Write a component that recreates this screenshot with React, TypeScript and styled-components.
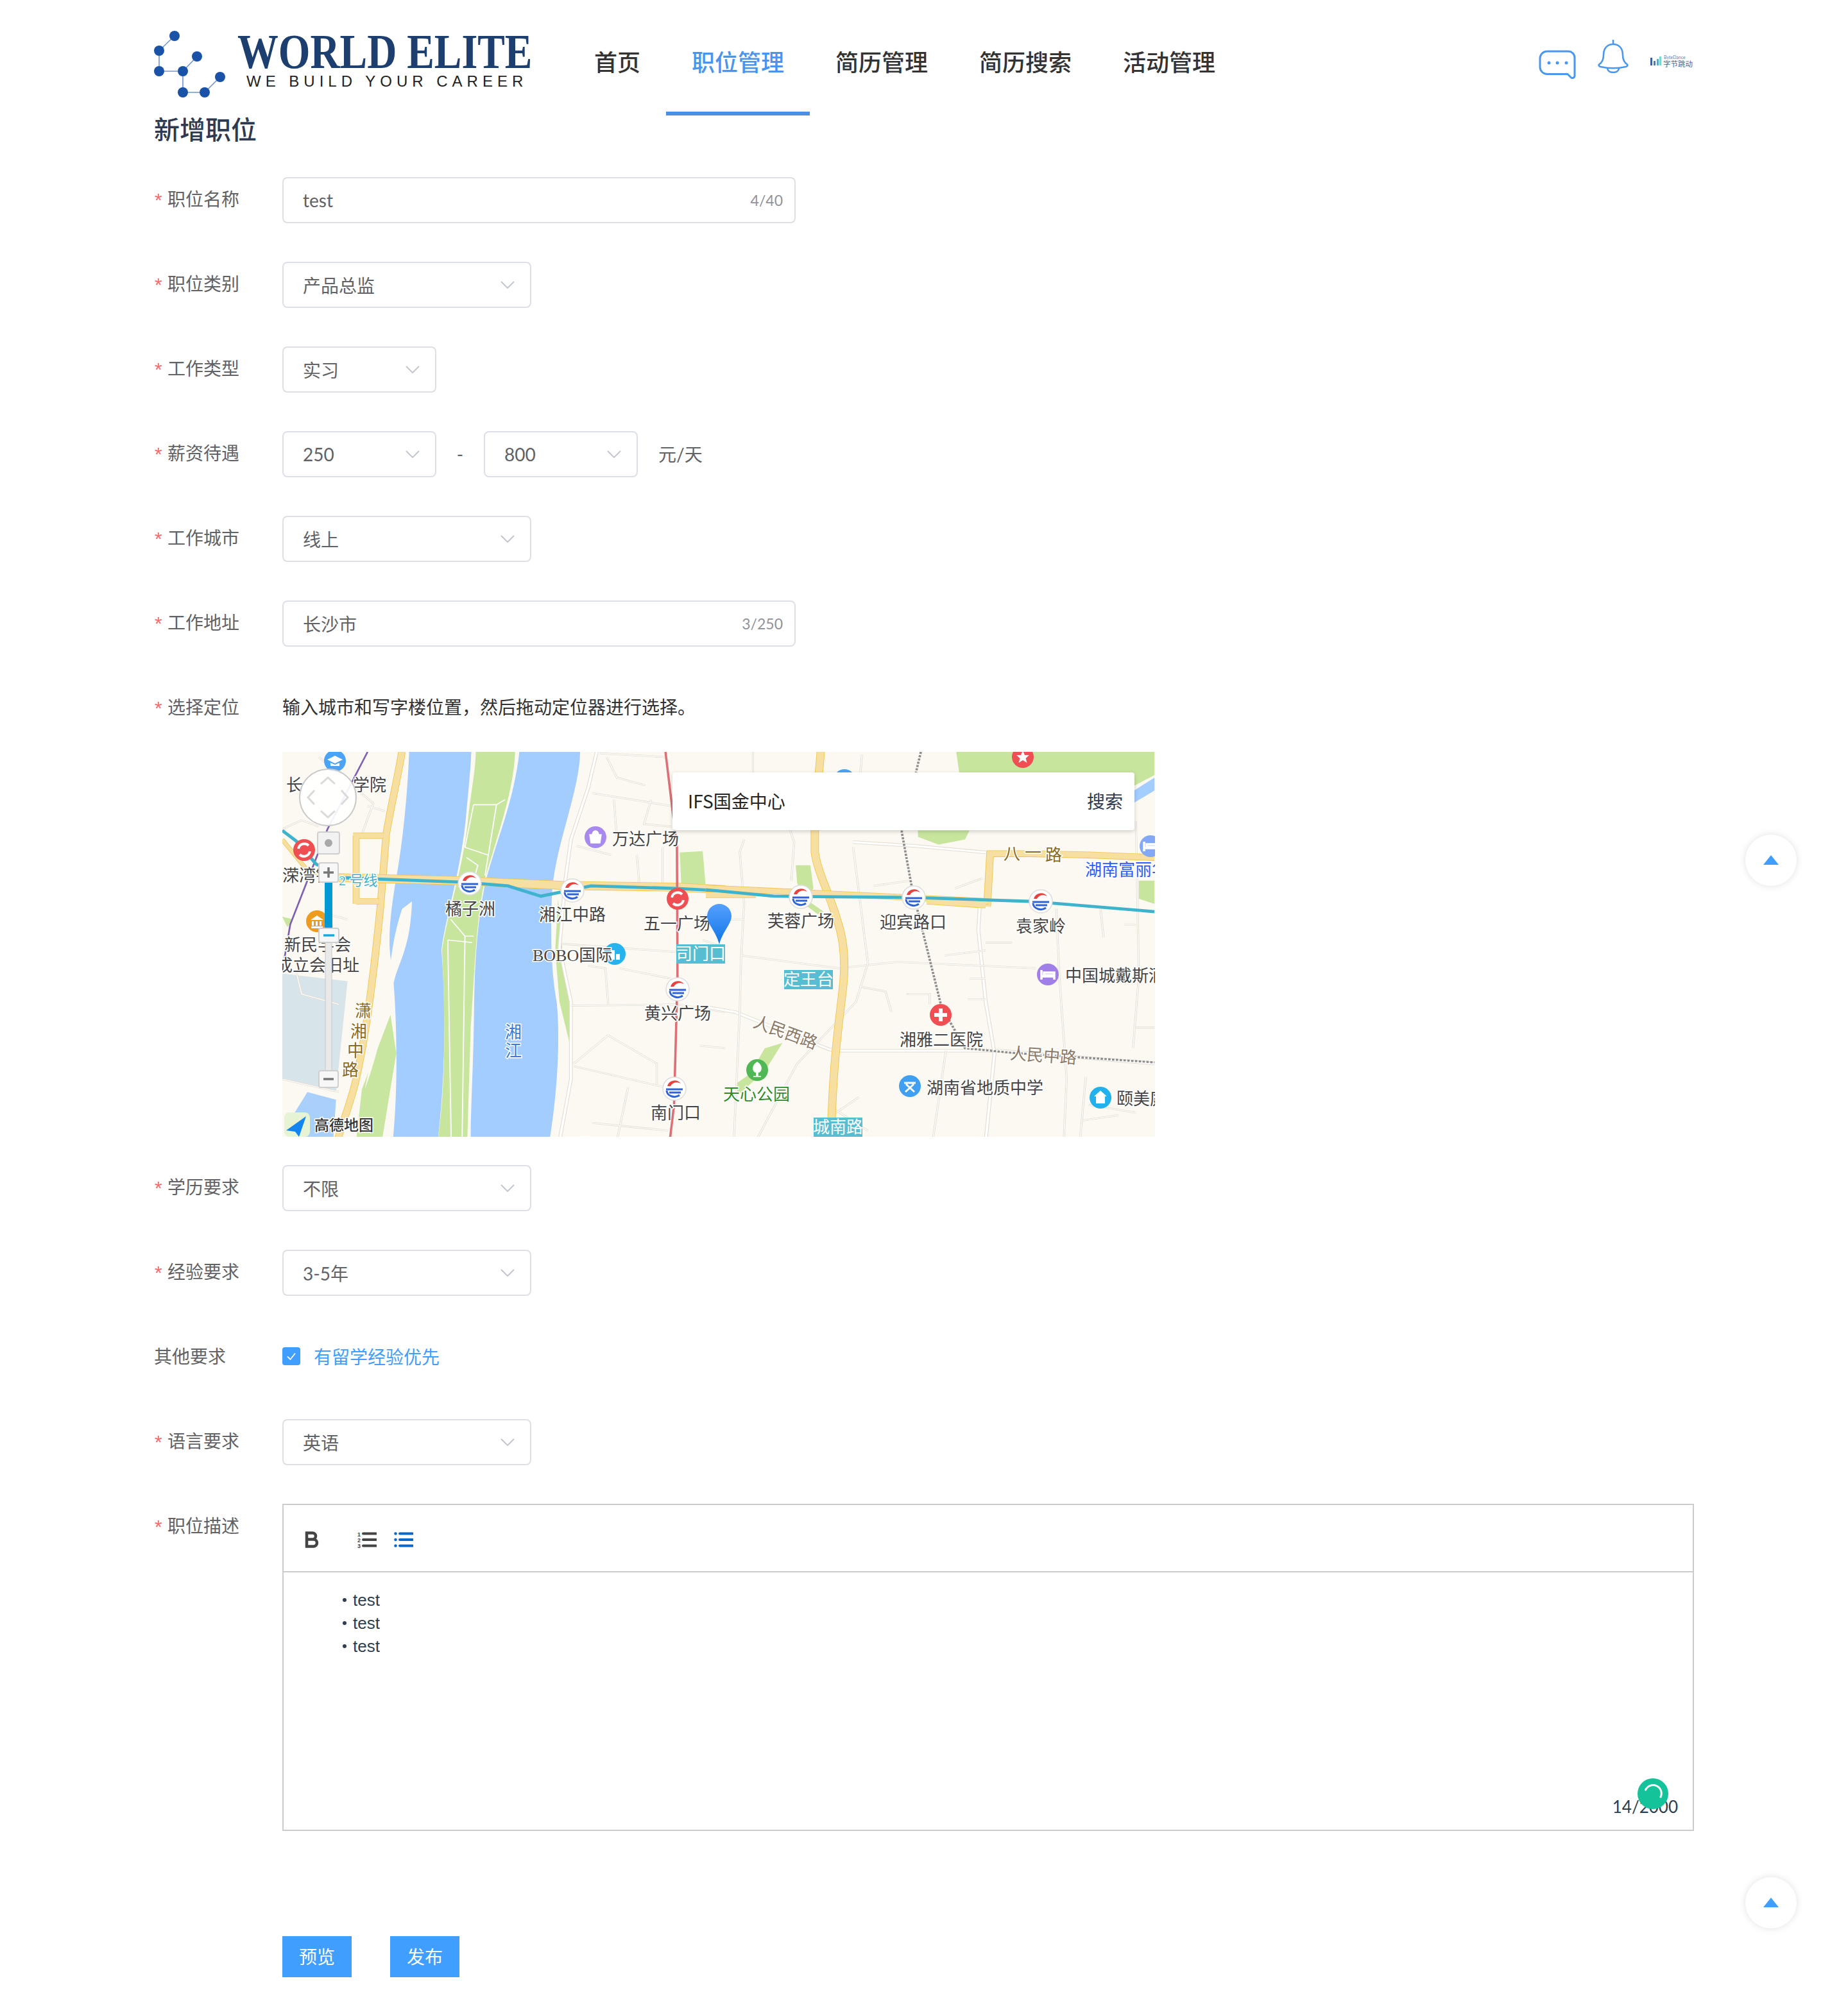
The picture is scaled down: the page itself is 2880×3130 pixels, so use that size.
import React from 'react';
import styled, { createGlobalStyle } from 'styled-components';

const GlobalStyle = createGlobalStyle`
  html, body {
    margin: 0;
    padding: 0;
    background: #fff;
    font-family: Lato, "Noto Sans CJK SC", sans-serif;
  }
  * { box-sizing: border-box; }
`;

const Page = styled.div`
  position: relative;
  width: 2880px;
  height: 3130px;
  padding: 0 240px;
  overflow: hidden;
`;

const Header = styled.header`
  display: flex;
  align-items: flex-start;
  height: 180px;
`;

const Logo = styled.div`
  display: flex;
  flex: none;
  width: 646px;
  height: 180px;
  padding-top: 48px;
`;

const LogoMarkSvg = styled.svg`
  flex: none;
`;

const LogoWords = styled.div`
  flex: none;
  width: 470px;
  margin-left: 18px;
  display: flex;
  flex-direction: column;
`;

const LogoName = styled.div`
  font-family: "Liberation Serif", serif;
  font-weight: 700;
  font-size: 76px;
  line-height: 64px;
  color: #1c3f70;
  white-space: nowrap;
  transform: scaleX(0.84);
  transform-origin: left center;
`;

const LogoTag = styled.div`
  font-family: "Liberation Sans", sans-serif;
  font-size: 24px;
  line-height: 30px;
  letter-spacing: 7px;
  margin: 0 0 0 14px;
  color: #222;
  white-space: nowrap;
`;

const Nav = styled.nav`
  display: flex;
  flex: 1;
`;

const NavItem = styled.a<{ $active?: boolean }>`
  height: 180px;
  padding: 0 40px;
  font-size: 36px;
  font-weight: 500;
  line-height: 194px;
  color: ${(p) => (p.$active ? '#4a94f0' : '#333')};
  border-bottom: 6px solid ${(p) => (p.$active ? '#4a90e2' : 'transparent')};
`;

const HeaderIcons = styled.div`
  display: flex;
  align-items: flex-start;
  padding-top: 62px;
  height: 180px;
  margin-right: 2px;
`;

const ChatIcon = styled.svg`
  margin: 16px 34px 0 0;
`;

const BellIcon = styled.svg`
  margin-right: 34px;
`;

const ByteLogo = styled.svg`
  margin-top: 24px;
`;

const Title = styled.h1`
  margin: 0 0 52px;
  font-size: 40px;
  font-weight: 500;
  line-height: 44px;
  color: #2d3a4f;
`;

const FormItem = styled.div<{ $gap?: number }>`
  display: flex;
  margin-bottom: ${(p) => p.$gap ?? 60}px;
  min-height: 72px;
`;

const Label = styled.label`
  flex: none;
  width: 200px;
  font-size: 28px;
  line-height: 68px;
  color: #606266;
  white-space: nowrap;
`;

const Star = styled.span`
  display: inline-block;
  width: 21px;
  padding-left: 1px;
  font-family: "Liberation Sans", sans-serif;
  font-size: 30px;
  color: #f56c6c;
  position: relative;
  top: 1px;
`;

const TextInput = styled.div`
  display: flex;
  align-items: center;
  justify-content: space-between;
  width: 800px;
  height: 72px;
  padding: 0 18px 0 30px;
  border: 2px solid #dcdfe6;
  border-radius: 8px;
  font-size: 28px;
  color: #606266;
`;

const Count = styled.span`
  font-size: 23px;
  color: #909399;
`;

const Select = styled.div<{ $small?: boolean }>`
  display: flex;
  align-items: center;
  justify-content: space-between;
  width: ${(p) => (p.$small ? 240 : 388)}px;
  height: 72px;
  padding: 0 24px 0 30px;
  border: 2px solid #dcdfe6;
  border-radius: 8px;
  font-size: 28px;
  color: #606266;
`;

const SalaryDash = styled.span`
  width: 74px;
  text-align: center;
  font-size: 28px;
  line-height: 72px;
  color: #606266;
`;

const Unit = styled.span`
  margin-left: 32px;
  font-size: 28px;
  line-height: 72px;
  color: #606266;
`;

const Hint = styled.div`
  font-size: 28px;
  line-height: 68px;
  color: #303133;
`;

const MapFrame = styled.div`
  position: relative;
  width: 1360px;
  height: 600px;
  margin: 0 0 44px 200px;
  overflow: hidden;
  background: #fcf9f2;
`;

const MapSearch = styled.div`
  position: absolute;
  left: 608px;
  top: 32px;
  width: 720px;
  height: 90px;
  display: flex;
  align-items: center;
  justify-content: space-between;
  padding: 0 18px 2px 24px;
  background: #fff;
  border-radius: 4px;
  box-shadow: 0 2px 6px rgba(0, 0, 0, 0.18);
  font-family: "Noto Sans CJK SC", sans-serif;
  font-size: 28px;
  color: #222;
`;

const SearchAction = styled.span`
  color: #2d3a4f;
`;

const MapText = styled.text<{ $tone?: string; $size?: number }>`
  font-family: "Liberation Serif", "Noto Sans CJK SC", serif;
  font-size: ${(p) => p.$size ?? 26}px;
  fill: ${(p) => p.$tone ?? '#444'};
  stroke: #fff;
  stroke-width: 3px;
  paint-order: stroke;
  dominant-baseline: central;
`;

const TagText = styled(MapText)`
  fill: #fff;
  stroke-width: 0;
`;

const CheckRow = styled.div`
  display: flex;
  align-items: center;
  gap: 21px;
  height: 68px;
  font-size: 28px;
  color: #409eff;
`;

const CheckBox = styled.span`
  display: flex;
  align-items: center;
  justify-content: center;
  width: 28px;
  height: 28px;
  border-radius: 4px;
  background: #409eff;
`;

const Editor = styled.div`
  position: relative;
  display: flex;
  flex-direction: column;
  width: 2200px;
  height: 510px;
  border: 2px solid #ccc;
`;

const Toolbar = styled.div`
  display: flex;
  align-items: center;
  height: 105px;
  padding: 4px 0 0 33px;
  border-bottom: 2px solid #ccc;
`;

const ToolIcon = styled.svg<{ $gap?: number }>`
  margin-right: ${(p) => p.$gap ?? 0}px;
`;

const EditorBody = styled.div`
  flex: 1;
  display: flex;
  flex-direction: column;
  padding: 25px 23px 18px 90px;
`;

const Bullet = styled.div`
  position: relative;
  padding-left: 18px;
  font-family: "Liberation Sans", sans-serif;
  font-size: 26px;
  line-height: 36px;
  color: #2c3e50;

  &::before {
    content: '';
    position: absolute;
    left: 2px;
    top: 15px;
    width: 6px;
    height: 6px;
    border-radius: 50%;
    background: #2c3e50;
  }
`;

const WordCount = styled.div`
  margin-top: auto;
  align-self: flex-end;
  font-size: 26px;
  line-height: 36px;
  color: #2c3e50;
`;

const GrammarBadge = styled.svg`
  position: absolute;
  right: 38px;
  bottom: 32px;
`;

const Actions = styled.div`
  display: flex;
  gap: 60px;
  margin: 164px 0 0 200px;
`;

const ActionButton = styled.button`
  width: 108px;
  height: 64px;
  padding: 0 0 2px;
  border: 0;
  background: #409eff;
  color: #fff;
  font-family: inherit;
  font-size: 28px;
`;

const ScrollTop = styled.div<{ $top: number }>`
  position: absolute;
  left: 2720px;
  top: ${(p) => p.$top}px;
  width: 80px;
  height: 80px;
  display: flex;
  align-items: center;
  justify-content: center;
  border-radius: 50%;
  background: #fff;
  box-shadow: 0 0 12px rgba(0, 0, 0, 0.12);

  &::after {
    content: '';
    margin-top: -2px;
    border-left: 12px solid transparent;
    border-right: 12px solid transparent;
    border-bottom: 15px solid #409eff;
  }
`;

function Chevron() {
  return (
    <svg width="22" height="14" viewBox="0 0 22 14" fill="none">
      <path d="M1 2l10 10L21 2" stroke="#c0c4cc" strokeWidth="1.8" />
    </svg>
  );
}

function LogoMark() {
  const dots = [
    [32, 8], [8, 31], [67, 40], [8, 63], [45, 63], [103, 72], [45, 96], [79, 96],
  ];
  return (
    <LogoMarkSvg width="112" height="108" viewBox="0 0 112 108" fill="none">
      <path
        d="M32 8L8 31V63H45V96H79L103 72M45 63L67 40"
        stroke="#6d95d6"
        strokeWidth="1.6"
      />
      {dots.map(([x, y]) => (
        <circle key={`${x}-${y}`} cx={x} cy={y} r="8" fill="#1a52a8" />
      ))}
    </LogoMarkSvg>
  );
}

function Metro({ x, y }: { x: number; y: number }) {
  return (
    <g transform={`translate(${x} ${y})`}>
      <circle r="18" fill="#fff" stroke="#ddd" strokeWidth="1.5" />
      <path d="M-11 -4a12 12 0 0 1 21 -4c-6-3-13-2-16 4z" fill="#e8423f" />
      <path d="M-13 1h26M-8 6h18" stroke="#2e63d6" strokeWidth="3" fill="none" />
      <path d="M-12 3a12 10 0 0 0 20 7" stroke="#2e63d6" strokeWidth="3" fill="none" />
    </g>
  );
}

function Poi({
  x,
  y,
  color,
  children,
  r = 17,
}: {
  x: number;
  y: number;
  color: string;
  children?: React.ReactNode;
  r?: number;
}) {
  return (
    <g transform={`translate(${x} ${y})`}>
      <circle r={r} fill={color} />
      {children}
    </g>
  );
}

function Road({ d, wide }: { d: string; wide?: boolean }) {
  return (
    <>
      <path d={d} fill="none" stroke="#e3dcd0" strokeWidth={wide ? 13 : 7} />
      <path d={d} fill="none" stroke="#fff" strokeWidth={wide ? 8 : 3} />
    </>
  );
}

function MainRoad({ d, w = 14 }: { d: string; w?: number }) {
  return (
    <>
      <path d={d} fill="none" stroke="#f3c54a" strokeWidth={w + 4} />
      <path d={d} fill="none" stroke="#f6dfa1" strokeWidth={w} />
    </>
  );
}

function StationTag({ x, y, w, text }: { x: number; y: number; w: number; text: string }) {
  return (
    <g>
      <rect x={x} y={y} width={w} height="30" fill="#57bdd0" />
      <TagText x={x + w / 2} y={y + 15} textAnchor="middle">
        {text}
      </TagText>
    </g>
  );
}

// zoom crops are stretched, so the geometry is traced per crop and scaled back
const LEFT_TRACE = 'translate(-10 -12) scale(0.4464 0.4016)';
const RIGHT_TRACE = 'translate(660 -12) scale(0.4591 0.4016)';

function CityMap() {
  return (
    <svg width="1360" height="600" viewBox="0 0 1360 600" style={{ display: 'block' }}>
      <rect width="1360" height="600" fill="#fcf9f2" />
      <g transform={LEFT_TRACE}>
        <path d="M22 890L250 920L210 1350L22 1300Z" fill="#d7e4ea" />
        <path d="M60 1440L110 1350L210 1380L200 1540H60Z" fill="#a9d0fb" />
        <path d="M22 670L60 680L40 710Z" fill="#c9e6a0" />
        <path d="M300 1340L400 1050L420 1200L370 1540H280Z" fill="#c9e6a0" />
        <path d="M1410 420L1490 415L1500 545H1415Z" fill="#c9e6a0" />
        <path
          d="M465 30C460 200 440 400 420 520C405 620 385 760 405 860C420 1000 430 1300 408 1540H565C590 1300 595 1050 578 800C590 680 640 520 662 300C670 200 680 100 682 30Z"
          fill="#a3ccff"
        />
        <path d="M850 30C830 220 780 340 735 520C710 640 695 800 692 1000C690 1250 680 1400 680 1540H955C990 1300 990 1100 980 1000C955 850 960 650 965 560C980 380 1060 180 1062 30Z" fill="#a3ccff" />
        <path d="M440 640L475 610C470 750 450 800 420 890C395 980 360 1200 310 1340L385 950C405 850 400 780 440 640Z" fill="#fcf9f2" />
        <path
          d="M698 30H835C830 180 780 330 730 520C700 680 695 850 680 1100L668 1540H565C595 1300 590 1050 580 800C600 650 650 500 670 300C680 190 695 120 698 30Z"
          fill="#c8e59e"
        />
        <path d="M985 600L1000 800L1025 1010L1025 1160L990 1000L975 800Z" fill="#c8e59e" />
        <path d="M690 235L770 235L800 215M690 235L660 400L740 430M665 440L705 470L695 510M610 680L660 745L690 745M600 760L685 770M770 235L730 510M600 760L612 1540M660 745L650 1540" fill="none" stroke="#fff" strokeWidth="4" />
        <Road wide d="M1120 30L1090 170L1030 370L1010 530L990 790L1030 1000L1030 1300L990 1540" />
        <Road d="M1130 35L1360 50M1155 50L1190 130L1290 160M1105 190L1380 240M1180 215L1190 360M1310 215L1285 310L1380 320M1050 395L1170 430" />
        <Road d="M1000 775L1568 820M1030 1015L1400 1010L1568 1040M1040 1250L1390 1340M1160 1130L1040 1240M1160 1130L1330 1240V1320M1230 1330L1190 1540M1105 1470L1370 1500M1090 860L1150 870L1160 1010M1200 870L1380 910M1260 430L1270 560M1350 400V540" />
        <Road d="M150 50L340 230L300 350M22 330L90 295L150 320M250 680L180 660M220 1010L90 970L70 880M22 1300L220 1350M320 240L380 260M1480 1170L1568 1180M1490 760L1568 790" />
        <MainRoad d="M440 30C425 130 400 250 385 350L365 630C345 850 320 1100 280 1300C260 1400 230 1470 215 1540" w={22} />
        <MainRoad d="M270 355H375M280 610H360M280 355V620" w={20} />
        <MainRoad d="M220 518L640 530L1000 548L1400 555L1568 565" w={30} />
        <MainRoad d="M22 370L110 490L160 505" w={12} />
        <path d="M320 30L180 330L50 700L30 830" fill="none" stroke="#7d5fb5" strokeWidth="6" />
        <path d="M1360 30L1400 400L1402 900L1390 1400L1375 1540" fill="none" stroke="#dd6f77" strokeWidth="8" />
        <path d="M22 335L70 375L140 465L220 518L640 535L810 550L925 590L1100 550L1400 560L1568 570" fill="none" stroke="#3fb2cc" strokeWidth="12" />
      </g>
      <g transform={RIGHT_TRACE}>
        <path d="M850 30H1523V120L1440 170L1420 140L1330 110H860Z" fill="#c8e59e" />
        <path d="M720 335H895L880 370L790 390L720 360Z" fill="#c8e59e" />
        <path d="M1523 130V180L1450 230L1440 190Z" fill="#a3ccff" />
        <path d="M1470 530H1523V620L1470 600Z" fill="#c8e59e" />
        <path d="M305 470H355L365 560L335 600L310 540Z" fill="#c8e59e" />
        <path d="M350 610L400 650L380 660L345 630Z" fill="#c8e59e" />
        <path d="M200 1180L260 1160L200 1270L170 1300L110 1360L100 1320L150 1280Z" fill="#c8e59e" />
        <Road wide d="M0 1020L100 1040L420 1185L460 1190L800 1190L1000 1190L1523 1240" />
        <Road wide d="M930 630L925 720L950 1000L980 1200L950 1540" />
        <Road wide d="M500 380L710 395L950 420" />
        <Road d="M130 370L115 420L130 620L120 820L115 1040L95 1540M120 820L450 870L650 845L1120 870M1460 300L1470 900L1450 1180M1190 640L1200 900L1225 1300L1215 1540" />
        <Road d="M500 400L550 850L510 1000L310 1240L170 1540M530 40L525 110M160 30V110M285 330L300 380L290 530M570 550L690 530M845 560L940 520M1460 1100H1523M1340 640L1350 750M950 770H1040M520 940L610 960L630 1040M815 1190L770 1540M1290 1290L1270 1540M1280 1460L1400 1440" />
        <Road d="M0 140L70 150M680 970H760V1010M890 990H950M810 820L950 800M895 910H950M1300 1400L1460 1430M440 1420L550 1500M520 1370L430 1440M20 680H130M1420 700H1460" />
        <MainRoad d="M390 30L370 300L370 420C380 500 420 580 445 680C470 760 475 850 465 950C450 1100 430 1250 425 1540" w={24} />
        <MainRoad d="M955 630L965 425H1100L1300 430L1523 440" w={22} />
        <MainRoad d="M0 558L230 570L960 610M0 585H170M750 610L950 625" w={20} />
        <path d="M730 30L665 340L700 560L800 1020L880 1180L1040 1198L1523 1235" fill="none" stroke="#8d8d8d" strokeWidth="8" strokeDasharray="8 5" />
        <path d="M0 565L230 590L700 595L1100 610L1523 650" fill="none" stroke="#3fb2cc" strokeWidth="12" />
      </g>

      <Metro x={292} y={205} />
      <Metro x={452} y={216} />
      <Metro x={616} y={370} />
      <Metro x={611} y={525} />
      <Metro x={808} y={226} />
      <Metro x={984} y={227} />
      <Metro x={1182} y={233} />

      {[
        [34, 153],
        [616, 229],
      ].map(([x, y]) => (
        <Poi key={x} x={x} y={y} color="#ef4f52">
          <path d="M-9 -2a9.500 9.500 0 0 1 16 -5M9 2a9.500 9.500 0 0 1 -16 5" fill="none" stroke="#fff" strokeWidth="4" />
        </Poi>
      ))}
      <Poi x={82} y={14} color="#4aa3f7">
        <path d="M-12 -2L0 -8L12 -2L0 4Z M-7 3V8H7V3L0 6Z" fill="#fff" />
      </Poi>
      <Poi x={876} y={44} color="#4aa3f7" />
      <Poi x={54} y={264} color="#ee9c1d">
        <path d="M-10 -2L0 -9L10 -2ZM-9 8H9V11H-9ZM-8 0H-5V7H-8ZM-2 0H1V7H-2ZM4 0H7V7H4Z" fill="#fff" />
      </Poi>
      <Poi x={488} y={133} color="#a889ee">
        <path d="M-9 -4H9L7 9H-7ZM-5 -4A5 6 0 0 1 5 -4" fill="#fff" stroke="#fff" strokeWidth="1.5" />
      </Poi>
      <Poi x={518} y={315} color="#27b3ee">
        <path d="M-6 9V-6H0V9ZM2 9V0H8V9Z" fill="#fff" />
      </Poi>
      <Poi x={1193} y={347} color="#a07fe8">
        <path d="M-10 -7V8M10 -1V8M-10 3H10M-6 -3H10V1H-6Z" fill="none" stroke="#fff" strokeWidth="3.500" />
      </Poi>
      <Poi x={1353} y={147} color="#83a8f5">
        <path d="M-10 -7V8M10 -1V8M-10 3H10M-6 -3H10V1H-6Z" fill="none" stroke="#fff" strokeWidth="3.500" />
      </Poi>
      <Poi x={1026} y={410} color="#ef4f52">
        <path d="M0 -10V10M-10 0H10" stroke="#fff" strokeWidth="6" />
      </Poi>
      <Poi x={1154} y={8} color="#ef4f52">
        <path d="M0 -10L3 -3L10 -3L4.500 2L6.500 9L0 5L-6.500 9L-4.500 2L-10 -3L-3 -3Z" fill="#fff" />
      </Poi>
      <Poi x={978} y={521} color="#3f9ff2">
        <path d="M-9 -5H9M-6 -3L7 9M6 -3L-7 9" fill="none" stroke="#fff" strokeWidth="3" />
      </Poi>
      <Poi x={1275} y={539} color="#23b1ee">
        <path d="M0 -11L10 -2H7V9H-7V-2H-10Z" fill="#fff" />
      </Poi>
      <Poi x={740} y={496} color="#4fb855">
        <path d="M0 -12C7 -8 8 0 3 3H-3C-8 0 -7 -8 0 -12ZM-1 3H1V10H-1ZM-6 10H6" fill="#fff" stroke="#fff" strokeWidth="1.5" />
      </Poi>

      <MapText x={6} y={52}>长</MapText>
      <MapText x={110} y={52}>学院</MapText>
      <MapText x={0} y={193}>溁湾镇</MapText>
      <MapText x={88} y={200} $size={22} $tone="#3fb2cc">2 号线</MapText>
      <MapText x={3} y={301}>新民学会</MapText>
      <MapText x={-10} y={333}>成立会旧址</MapText>
      <MapText x={126} y={404} textAnchor="middle" $tone="#8b6b1f">潇</MapText>
      <MapText x={119} y={436} textAnchor="middle" $tone="#8b6b1f">湘</MapText>
      <MapText x={114} y={466} textAnchor="middle" $tone="#8b6b1f">中</MapText>
      <MapText x={106} y={496} textAnchor="middle" $tone="#8b6b1f">路</MapText>
      <MapText x={360} y={437} textAnchor="middle" $tone="#3a7bd5">湘</MapText>
      <MapText x={360} y={466} textAnchor="middle" $tone="#3a7bd5">江</MapText>
      <MapText x={293} y={245} textAnchor="middle">橘子洲</MapText>
      <MapText x={452} y={254} textAnchor="middle">湘江中路</MapText>
      <MapText x={615} y={268} textAnchor="middle">五一广场</MapText>
      <MapText x={390} y={317}>BOBO国际</MapText>
      <MapText x={616} y={408} textAnchor="middle">黄兴广场</MapText>
      <MapText x={613} y={563} textAnchor="middle">南门口</MapText>
      <MapText x={514} y={136}>万达广场</MapText>
      <MapText x={808} y={264} textAnchor="middle">芙蓉广场</MapText>
      <MapText x={983} y={266} textAnchor="middle">迎宾路口</MapText>
      <MapText x={1182} y={272} textAnchor="middle">袁家岭</MapText>
      <MapText x={1137} y={159} textAnchor="middle" $tone="#8b6b1f">八</MapText>
      <MapText x={1170} y={157} textAnchor="middle" $tone="#8b6b1f">一</MapText>
      <MapText x={1202} y={161} textAnchor="middle" $tone="#8b6b1f">路</MapText>
      <MapText x={1251} y={184} $tone="#2b5cff">湖南富丽华</MapText>
      <MapText x={1220} y={349}>中国城戴斯酒店</MapText>
      <MapText x={784} y={438} textAnchor="middle" $tone="#8b7a66" transform="rotate(20 784 438)">人民西路</MapText>
      <MapText x={1027} y={449} textAnchor="middle">湘雅二医院</MapText>
      <MapText x={1186} y={474} textAnchor="middle" $tone="#8b7a66" transform="rotate(4 1186 474)">人民中路</MapText>
      <MapText x={1004} y={524}>湖南省地质中学</MapText>
      <MapText x={1300} y={541}>颐美庭</MapText>
      <MapText x={739} y={534} textAnchor="middle" $tone="#2e8b1f">天心公园</MapText>
      <StationTag x={614} y={300} w={76} text="司门口" />
      <StationTag x={782} y={340} w={76} text="定王台" />
      <StationTag x={828} y={570} w={76} text="城南路" />

      <defs>
        <linearGradient id="pinFill" x1="0" y1="0" x2="0" y2="1">
          <stop offset="0" stopColor="#55a0ff" />
          <stop offset="1" stopColor="#0f74e6" />
        </linearGradient>
      </defs>
      <path d="M681 300C676 280 662 268 662 256A19 19 0 0 1 700 256C700 268 686 280 681 300Z" fill="url(#pinFill)" />

      <circle cx="71" cy="71" r="44" fill="#fff" fillOpacity="0.92" stroke="#c9c9c9" strokeWidth="2" />
      <path d="M60 50L71 40L82 50M60 92L71 102L82 92M50 60L40 71L50 82M92 60L102 71L92 82" fill="none" stroke="#dadada" strokeWidth="3" />
      <rect x="66" y="199" width="12" height="76" fill="#0099d6" />
      <rect x="67" y="275" width="10" height="222" fill="#e9e9e9" stroke="#c8c8c8" />
      <rect x="55" y="125" width="34" height="34" rx="3" fill="#f2f2f2" stroke="#cfcfcf" strokeWidth="2" />
      <circle cx="72" cy="142" r="6" fill="#a8a8a8" />
      <rect x="57" y="173" width="30" height="30" rx="3" fill="#f7f7f7" stroke="#cfcfcf" strokeWidth="2" />
      <path d="M72 180V196M64 188H80" stroke="#777" strokeWidth="3.500" />
      <rect x="57" y="275" width="31" height="22" rx="3" fill="#f7f7f7" stroke="#cfcfcf" strokeWidth="2" />
      <path d="M64 286H81" stroke="#1aa7dc" strokeWidth="3.500" />
      <rect x="57" y="497" width="30" height="26" rx="3" fill="#f7f7f7" stroke="#cfcfcf" strokeWidth="2" />
      <path d="M64 510H80" stroke="#777" strokeWidth="3.500" />

      <rect x="3" y="562" width="40" height="38" rx="8" fill="#e7f4d3" />
      <path d="M37 568L6 590L20 592L26 600Z" fill="#1385f0" />
      <MapText x={50} y={582} $size={23} style={{ fontWeight: 500 }} $tone="#333">高德地图</MapText>
      <MapText x={155} y={610} $size={22} $tone="#444">© 2021 AutoNavi - GS(2019)1786号</MapText>
    </svg>
  );
}

function RequiredLabel({ children }: { children: React.ReactNode }) {
  return (
    <Label>
      <Star>*</Star>
      {children}
    </Label>
  );
}

function SelectField({ value, small }: { value: string; small?: boolean }) {
  return (
    <Select $small={small}>
      {value}
      <Chevron />
    </Select>
  );
}

export default function App() {
  return (
    <Page>
      <GlobalStyle />
      <Header>
        <Logo>
          <LogoMark />
          <LogoWords>
            <LogoName>WORLD ELITE</LogoName>
            <LogoTag>WE BUILD YOUR CAREER</LogoTag>
          </LogoWords>
        </Logo>
        <Nav>
          <NavItem>首页</NavItem>
          <NavItem $active>职位管理</NavItem>
          <NavItem>简历管理</NavItem>
          <NavItem>简历搜索</NavItem>
          <NavItem>活动管理</NavItem>
        </Nav>
        <HeaderIcons>
          <ChatIcon width="58" height="46" viewBox="0 0 58 46" fill="none">
            <path
              d="M13 2H46A10 10 0 0 1 56 12V40A3.500 3.500 0 0 1 50 42.500L45 37.500H13A11 11 0 0 1 2 26.500V13A11 11 0 0 1 13 2Z"
              stroke="#4a97f0"
              strokeWidth="3"
            />
            <circle cx="16" cy="20" r="2.500" fill="#4a97f0" />
            <circle cx="29" cy="20" r="2.500" fill="#4a97f0" />
            <circle cx="43" cy="20" r="2.500" fill="#4a97f0" />
          </ChatIcon>
          <BellIcon width="48" height="52" viewBox="0 0 48 52" fill="none" stroke="#4a97f0" strokeWidth="2.600">
            <path d="M24 0V7" />
            <path d="M24 7C14 7 9 14 9 24C9 32 6 36 2 38.500C1 40 2 41 4 42C17 45 31 45 44 42C46 41 47 40 46 38.500C42 36 39 32 39 24C39 14 34 7 24 7Z" />
            <path d="M15 44.500C16 53 32 53 33 44.500" />
          </BellIcon>
          <ByteLogo width="66" height="20" viewBox="0 0 66 20">
            <rect x="0" y="4" width="3" height="12" fill="#3a5fa8" />
            <rect x="5" y="9" width="3" height="7" fill="#4f78b8" />
            <rect x="10" y="6" width="3" height="10" fill="#5fa8c8" />
            <rect x="14" y="2" width="3" height="14" fill="#78d8cc" />
            <text x="21" y="6" fontFamily="Lato, sans-serif" fontSize="7" fill="#6b7f9c">ByteDance</text>
            <text x="20" y="18" fontFamily="'Noto Sans CJK SC', sans-serif" fontSize="11.500" fill="#47648f">字节跳动</text>
          </ByteLogo>
        </HeaderIcons>
      </Header>

      <Title>新增职位</Title>

      <FormItem>
        <RequiredLabel>职位名称</RequiredLabel>
        <TextInput>
          test
          <Count>4/40</Count>
        </TextInput>
      </FormItem>
      <FormItem>
        <RequiredLabel>职位类别</RequiredLabel>
        <SelectField value="产品总监" />
      </FormItem>
      <FormItem>
        <RequiredLabel>工作类型</RequiredLabel>
        <SelectField value="实习" small />
      </FormItem>
      <FormItem>
        <RequiredLabel>薪资待遇</RequiredLabel>
        <SelectField value="250" small />
        <SalaryDash>-</SalaryDash>
        <SelectField value="800" small />
        <Unit>元/天</Unit>
      </FormItem>
      <FormItem>
        <RequiredLabel>工作城市</RequiredLabel>
        <SelectField value="线上" />
      </FormItem>
      <FormItem>
        <RequiredLabel>工作地址</RequiredLabel>
        <TextInput>
          长沙市
          <Count>3/250</Count>
        </TextInput>
      </FormItem>
      <FormItem $gap={32}>
        <RequiredLabel>选择定位</RequiredLabel>
        <Hint>输入城市和写字楼位置，然后拖动定位器进行选择。</Hint>
      </FormItem>

      <MapFrame>
        <CityMap />
        <MapSearch>
          IFS国金中心
          <SearchAction>搜索</SearchAction>
        </MapSearch>
      </MapFrame>

      <FormItem>
        <RequiredLabel>学历要求</RequiredLabel>
        <SelectField value="不限" />
      </FormItem>
      <FormItem>
        <RequiredLabel>经验要求</RequiredLabel>
        <SelectField value="3-5年" />
      </FormItem>
      <FormItem>
        <Label>其他要求</Label>
        <CheckRow>
          <CheckBox>
            <svg width="18" height="18" viewBox="0 0 18 18" fill="none">
              <path d="M3 9.500L7.500 14L15 4.500" stroke="#fff" strokeWidth="1.800" />
            </svg>
          </CheckBox>
          有留学经验优先
        </CheckRow>
      </FormItem>
      <FormItem>
        <RequiredLabel>语言要求</RequiredLabel>
        <SelectField value="英语" />
      </FormItem>
      <FormItem $gap={0}>
        <RequiredLabel>职位描述</RequiredLabel>
        <Editor>
          <Toolbar>
            <ToolIcon $gap={60} width="22" height="26" viewBox="0 0 22 26" fill="none">
              <path d="M3 2.500H12A5 5 0 0 1 12 12.500H3ZM3 12.500H13.500A5.500 5.500 0 0 1 13.500 23.500H3Z" stroke="#444" strokeWidth="4.500" />
            </ToolIcon>
            <ToolIcon $gap={27} width="30" height="26" viewBox="0 0 30 26">
              <path d="M9 3.500H29M9 13H29M9 22.500H29" stroke="#444" strokeWidth="4" strokeLinecap="round" />
              <text x="0" y="8" fontFamily="'Liberation Sans', sans-serif" fontWeight="700" fontSize="9" fill="#444">1</text>
              <text x="0" y="17" fontFamily="'Liberation Sans', sans-serif" fontWeight="700" fontSize="9" fill="#444">2</text>
              <text x="0" y="26" fontFamily="'Liberation Sans', sans-serif" fontWeight="700" fontSize="9" fill="#444">3</text>
            </ToolIcon>
            <ToolIcon width="30" height="26" viewBox="0 0 30 26">
              <path d="M9 3.500H29M9 13H29M9 22.500H29" stroke="#0a66c8" strokeWidth="4" strokeLinecap="round" />
              <circle cx="2.500" cy="3.500" r="2.300" fill="#0a66c8" />
              <circle cx="2.500" cy="13" r="2.300" fill="#0a66c8" />
              <circle cx="2.500" cy="22.500" r="2.300" fill="#0a66c8" />
            </ToolIcon>
          </Toolbar>
          <EditorBody>
            <Bullet>test</Bullet>
            <Bullet>test</Bullet>
            <Bullet>test</Bullet>
            <WordCount>14/2000</WordCount>
          </EditorBody>
          <GrammarBadge width="48" height="48" viewBox="0 0 48 48" fill="none">
            <circle cx="24" cy="24" r="24" fill="#15c39a" />
            <path d="M12.500 18A12.500 12.500 0 0 1 36 29" stroke="#fff" strokeWidth="3" strokeLinecap="round" />
          </GrammarBadge>
        </Editor>
      </FormItem>

      <Actions>
        <ActionButton>预览</ActionButton>
        <ActionButton>发布</ActionButton>
      </Actions>

      <ScrollTop $top={1301} />
      <ScrollTop $top={2926} />
    </Page>
  );
}
